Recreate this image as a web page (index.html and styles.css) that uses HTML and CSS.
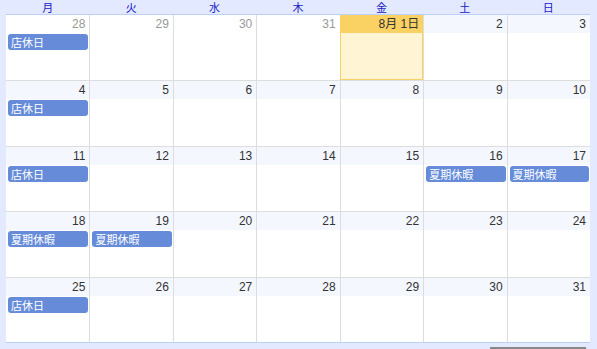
FILE: index.html
```html
<!DOCTYPE html>
<html lang="ja">
<head>
<meta charset="utf-8">
<link rel="stylesheet" href="styles.css">
</head>
<body>
<div class="cal">
  <div class="dow">
    <div>月</div><div>火</div><div>水</div><div>木</div><div>金</div><div>土</div><div>日</div>
  </div>
  <div class="grid">
    <div class="week">
      <div class="day other"><div class="num">28</div><div class="ev">店休日</div></div>
      <div class="day other"><div class="num">29</div></div>
      <div class="day other"><div class="num">30</div></div>
      <div class="day other"><div class="num">31</div></div>
      <div class="day today"><div class="num">8月 1日</div></div>
      <div class="day"><div class="num">2</div></div>
      <div class="day"><div class="num">3</div></div>
    </div>
    <div class="week">
      <div class="day"><div class="num">4</div><div class="ev">店休日</div></div>
      <div class="day"><div class="num">5</div></div>
      <div class="day"><div class="num">6</div></div>
      <div class="day"><div class="num">7</div></div>
      <div class="day"><div class="num">8</div></div>
      <div class="day"><div class="num">9</div></div>
      <div class="day"><div class="num">10</div></div>
    </div>
    <div class="week">
      <div class="day"><div class="num">11</div><div class="ev">店休日</div></div>
      <div class="day"><div class="num">12</div></div>
      <div class="day"><div class="num">13</div></div>
      <div class="day"><div class="num">14</div></div>
      <div class="day"><div class="num">15</div></div>
      <div class="day"><div class="num">16</div><div class="ev">夏期休暇</div></div>
      <div class="day"><div class="num">17</div><div class="ev">夏期休暇</div></div>
    </div>
    <div class="week">
      <div class="day"><div class="num">18</div><div class="ev">夏期休暇</div></div>
      <div class="day"><div class="num">19</div><div class="ev">夏期休暇</div></div>
      <div class="day"><div class="num">20</div></div>
      <div class="day"><div class="num">21</div></div>
      <div class="day"><div class="num">22</div></div>
      <div class="day"><div class="num">23</div></div>
      <div class="day"><div class="num">24</div></div>
    </div>
    <div class="week">
      <div class="day"><div class="num">25</div><div class="ev">店休日</div></div>
      <div class="day"><div class="num">26</div></div>
      <div class="day"><div class="num">27</div></div>
      <div class="day"><div class="num">28</div></div>
      <div class="day"><div class="num">29</div></div>
      <div class="day"><div class="num">30</div></div>
      <div class="day"><div class="num">31</div></div>
    </div>
  </div>
  <div class="foot"><div class="bar"></div></div>
</div>
</body>
</html>
```
FILE: styles.css
```css
html, body {
  margin: 0;
  padding: 0;
  background: #e3e9ff;
  width: 597px;
  height: 349px;
  overflow: hidden;
  font-family: "Liberation Sans", "Noto Sans CJK JP", sans-serif;
}
.cal {
  padding-left: 6px;
  width: 584px;
}
.dow {
  display: grid;
  grid-template-columns: repeat(7, 1fr);
  height: 14px;
  font-family: "Noto Sans CJK JP", sans-serif;
  font-size: 11px;
  line-height: 14px;
  color: #2020c8;
  text-align: center;
}
.grid {
  background: #fff;
  border-top: 1px solid #bcd0f5;
  border-bottom: 1px solid #bcd0f5;
  height: 327px;
  display: grid;
  grid-template-rows: repeat(5, 1fr);
}
.week {
  display: grid;
  grid-template-columns: repeat(7, 1fr);
  min-height: 0;
}
.week + .week {
  border-top: 1px solid #dddddd;
}
.day {
  background: #fff;
  min-width: 0;
  display: flex;
  flex-direction: column;
}
.day + .day {
  border-left: 1px solid #dddddd;
}
.num {
  height: 18px;
  line-height: 18px;
  font-size: 12px;
  text-align: right;
  padding-right: 4px;
  color: #333;
  background: #f5f7ff;
  font-family: "Liberation Sans", "Noto Sans CJK JP", sans-serif;
}
.other .num {
  background: #fff;
  color: #999;
}
.today {
  background: #fff5d4;
  border: 1px solid #fad163;
}
.day + .day.today {
  border-left: 1px solid #fad163;
}
.today .num {
  background: #fad163;
  color: #333;
  height: 17px;
  line-height: 17px;
  padding-right: 3px;
}
.ev {
  margin: 1px 1px 0 2px;
  height: 16px;
  line-height: 16px;
  border-radius: 3px;
  background: #668cd9;
  color: #fff;
  font-family: "Noto Sans CJK JP", sans-serif;
  font-size: 11px;
  padding-left: 3px;
  white-space: nowrap;
  overflow: hidden;
}
.foot {
  display: flex;
  justify-content: flex-end;
  padding-top: 4px;
  padding-right: 4px;
}
.bar {
  width: 96px;
  height: 2px;
  background: #888;
}
```
